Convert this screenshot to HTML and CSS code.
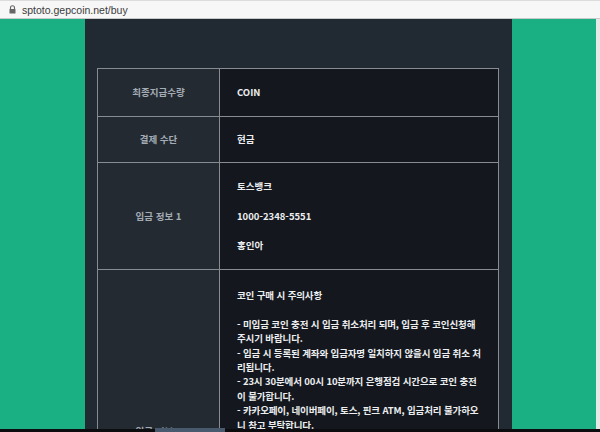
FILE: index.html
```html
<!DOCTYPE html>
<html lang="ko">
<head>
    <meta charset="UTF-8">
    <meta name="viewport" content="width=device-width, initial-scale=1.0">
    <title>코인 구매</title>
    <link rel="stylesheet" href="styles.css">
</head>
<body>
    <div class="urlbar">
        <svg class="lock" width="7" height="9" viewBox="0 0 7 9">
            <path d="M1.5 4V2.8a2 2 0 0 1 4 0V4" fill="none" stroke="#666" stroke-width="1.1"/>
            <rect x="0.5" y="4" width="6" height="4.6" rx="0.6" fill="#666"/>
        </svg>
        <span class="url">sptoto.gepcoin.net/buy</span>
    </div>

    <div class="page">
        <div class="panel">
            <table class="buy-table">
                <tr class="row-short">
                    <th>최종지급수량</th>
                    <td>COIN</td>
                </tr>
                <tr class="row-short">
                    <th>결제 수단</th>
                    <td>현금</td>
                </tr>
                <tr>
                    <th>입금 정보 1</th>
                    <td class="bank">
                        <p>토스뱅크</p>
                        <p>1000-2348-5551</p>
                        <p>홍인아</p>
                    </td>
                </tr>
                <tr>
                    <th>입금 정보 2</th>
                    <td class="notice">
                        <p>코인 구매 시 주의사항</p>
                        <p>- 미입금 코인 충전 시 입금 취소처리 되며, 입금 후 코인신청해 주시기 바랍니다.<br>
                        - 입금 시 등록된 계좌와 입금자명 일치하지 않을시 입금 취소 처리됩니다.<br>
                        - 23시 30분에서 00시 10분까지 은행점검 시간으로 코인 충전이 불가합니다.<br>
                        - 카카오페이, 네이버페이, 토스, 핀크 ATM, 입금처리 불가하오니 참고 부탁합니다.<br>
                        - 입금 후 10분 이내 처리되지 않을 경우 고객센터로 문의 바랍니다.<br>
                        - 타인 명의 입금은 처리되지 않습니다.</p>
                        <p>- 코인 구매 후 환불은 불가하오니 신중히 구매해 주시기 바랍니다.</p>
                        <p>문의: 고객센터</p>
                        <p>감사합니다.</p>
                    </td>
                </tr>
            </table>
        </div>
        <div class="scrollbar"></div>
    </div>

    <div class="taskbar"><span class="task-thumb"></span></div>
</body>
</html>
```

FILE: styles.css
```css
html, body {
    margin: 0;
    height: 100%;
    overflow: hidden;
}
body {
    font-family: "Noto Sans CJK KR", "Noto Sans", sans-serif;
    background-color: #1bb084;
}
.urlbar {
    display: flex;
    align-items: center;
    padding-left: 9px;
    background: #f7f7f7;
    border-top: 1px solid #dcdcdc;
    border-bottom: 1px solid #c9c9c9;
    box-sizing: border-box;
    height: 19px;
}
.lock {
    margin-right: 6px;
}
.url {
    font-family: "Liberation Sans", Arial, sans-serif;
    font-size: 10.5px;
    color: #3c3c3c;
}
.page {
    display: flex;
    height: calc(100% - 19px);
}
.panel {
    width: 427px;
    margin-left: 85px;
    padding: 49px 13px 0 12px;
    box-sizing: border-box;
    background: #212933;
}
.scrollbar {
    width: 4px;
    margin-left: auto;
    background: #e6e8e8;
}
.buy-table {
    width: 402px;
    border-collapse: collapse;
    font-size: 9.5px;
    line-height: 15px;
}
.buy-table th,
.buy-table td {
    border: 1px solid #868c92;
}
.buy-table th {
    width: 119px;
    background: #232a32;
    color: #a3abb4;
    font-weight: 700;
    text-align: center;
    vertical-align: middle;
}
.buy-table td {
    background: #14181e;
    color: #eceef0;
    font-weight: 700;
    padding: 16px 17px;
}
.row-short:nth-child(2) td {
    padding: 15px 17px;
}
.buy-table p {
    margin: 0;
}
.bank {
    padding-top: 16px;
    padding-bottom: 14px;
}
.bank p + p {
    margin-top: 14.5px;
}
.notice {
    line-height: 14.4px;
    letter-spacing: -0.13px;
}
.buy-table td.notice {
    padding-top: 18px;
}
.notice p + p {
    margin-top: 14.4px;
}
.taskbar {
    position: fixed;
    left: 0;
    right: 0;
    bottom: 0;
    height: 3px;
    background: #0d0d0f;
}
.task-thumb {
    position: absolute;
    left: 155px;
    bottom: 0;
    width: 70px;
    height: 4px;
    background: #4a5a6e;
}
```
